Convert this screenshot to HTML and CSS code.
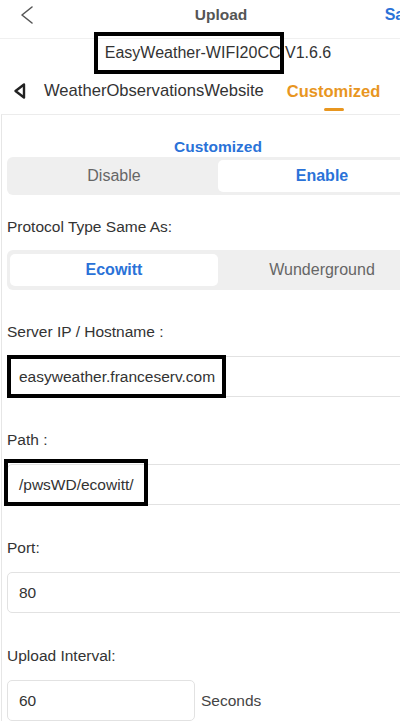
FILE: index.html
```html
<!DOCTYPE html>
<html lang="en">
<head>
  <meta charset="UTF-8" />
  <title>Upload</title>
  <link rel="stylesheet" href="styles.css">
</head>
<body>
<div class="app">

  <!-- NAV BAR -->
  <header class="navBar">
    <div class="navLeft">
      <svg class="backIcon" width="14" height="20" viewBox="0 0 14 20">
        <path d="M12 2 L2 10 L12 18" fill="none" stroke="#555" stroke-width="1.6" stroke-linecap="round" stroke-linejoin="round"/>
      </svg>
    </div>
    <div class="navTitle">Upload</div>
    <div class="navRight">Save</div>
  </header>

  <!-- DEVICE NAME -->
  <div class="deviceRow">
    <span class="marked markedDevice">EasyWeather-WIFI20CC</span> V1.6.6
  </div>

  <!-- TABS -->
  <nav class="tabRow">
    <svg class="tabArrow" width="13" height="18" viewBox="0 0 13 18">
      <path d="M11 2.5 L2.5 9 L11 15.5 Z" fill="none" stroke="#222" stroke-width="2.4" stroke-linejoin="round"/>
    </svg>
    <div class="tab">WeatherObservationsWebsite</div>
    <div class="tab active">Customized<span class="tabLine"></span></div>
  </nav>

  <!-- SETTINGS -->
  <main class="content">
    <h2 class="sectionTitle">Customized</h2>
    <div class="segmented">
      <div class="segment">Disable</div>
      <div class="segment selected">Enable</div>
    </div>

    <div class="fieldLabel first">Protocol Type Same As:</div>
    <div class="segmented tall">
      <div class="segment selected">Ecowitt</div>
      <div class="segment">Wunderground</div>
    </div>

    <div class="field">
      <div class="fieldLabel">Server IP / Hostname :</div>
      <div class="inputBox">
        <span class="marked markedServer">easyweather.franceserv.com</span>
      </div>
    </div>

    <div class="field">
      <div class="fieldLabel">Path :</div>
      <div class="inputBox">
        <span class="marked markedPath">/pwsWD/ecowitt/</span>
      </div>
    </div>

    <div class="field">
      <div class="fieldLabel">Port:</div>
      <div class="inputBox">80</div>
    </div>

    <div class="field">
      <div class="fieldLabel">Upload Interval:</div>
      <div class="inlineField">
        <div class="inputBox short">60</div>
        <span class="unit">Seconds</span>
      </div>
    </div>
  </main>

</div>
</body>
</html>
```

FILE: styles.css
```css
/* RESET */
* {
  margin: 0;
  padding: 0;
  box-sizing: border-box;
}

html, body {
  overflow: hidden;
  background-color: #fff;
}

body {
  font-family: "Liberation Sans", Arial, sans-serif;
  font-size: 16px;
  color: #333;
  line-height: 20px;
}

/* the phone screen is a bit wider than the window */
.app {
  width: 436px;
}

/* Nav bar */
.navBar {
  display: grid;
  grid-template-columns: 1fr auto 1fr;
  height: 39px;
  padding: 5px 14px 0 20px;
  border-bottom: 1px solid #f0f0f0;
}
.backIcon {
  display: block;
}
.navTitle {
  font-size: 15.5px;
  font-weight: bold;
  color: #555;
}
.navRight {
  justify-self: end;
  font-weight: bold;
  color: #2a72d8;
}

/* Device name row */
.deviceRow {
  text-align: center;
  padding-top: 4px;
  height: 32px;
  color: #333;
}

/* Annotation boxes drawn over the screenshot */
.marked {
  position: relative;
}
.marked::after {
  content: "";
  position: absolute;
  border: 4px solid #000;
}
.markedDevice::after {
  left: -11px;
  right: -3px;
  top: -12px;
  bottom: -13px;
}
.markedServer::after {
  left: -12px;
  right: -11px;
  top: -12px;
  bottom: -11px;
}
.markedPath::after {
  left: -15px;
  right: -14px;
  top: -16px;
  bottom: -11px;
}

/* Tabs */
.tabRow {
  display: flex;
  align-items: flex-start;
  padding: 10px 0 3px 13px;
  height: 43px;
}
.tabArrow {
  margin: 1px 18px 0 0;
  flex-shrink: 0;
}
.tab {
  color: #333;
  font-size: 16.6px;
  margin-right: 23px;
  white-space: nowrap;
  display: flex;
  flex-direction: column;
  align-items: center;
}
.tab.active {
  color: #e8961f;
  font-weight: bold;
  font-size: 16.5px;
}
.tabLine {
  width: 20px;
  height: 3px;
  border-radius: 2px;
  background-color: #e8961f;
  margin-top: 7px;
}

/* Main content panel */
.content {
  margin-left: 1px;
  border-left: 1px solid #e6e6e6;
  border-top: 1px solid #ececec;
  padding: 22px 7px 0 5px;
}

.sectionTitle {
  text-align: center;
  font-size: 15.5px;
  font-weight: bold;
  color: #2a72d8;
}

/* Segmented controls */
.segmented {
  display: flex;
  background-color: #efefef;
  border-radius: 6px;
  padding: 3px;
  height: 38px;
}
.segmented.tall {
  height: 40px;
  padding: 4px 3px;
}
.segment {
  flex: 1;
  display: flex;
  align-items: center;
  justify-content: center;
  color: #666;
  border-radius: 5px;
}
.segment.selected {
  background-color: #fff;
  color: #2a72d8;
  font-weight: bold;
}

/* Labels and inputs */
.fieldLabel {
  font-size: 15.5px;
  color: #333;
  margin-bottom: 14px;
}
.fieldLabel.first {
  margin-top: 22px;
  margin-bottom: 13px;
}
.field {
  margin-top: 32px;
}
.field + .field {
  margin-top: 33px;
}
.inputBox {
  height: 41px;
  display: flex;
  align-items: center;
  padding-left: 11px;
  border: 1px solid #e2e2e2;
  border-radius: 5px;
  font-size: 15.5px;
  color: #333;
}
.inlineField {
  display: flex;
  align-items: center;
}
.inputBox.short {
  width: 188px;
}
.unit {
  margin-left: 6px;
  font-size: 15.5px;
  color: #444;
}
```
